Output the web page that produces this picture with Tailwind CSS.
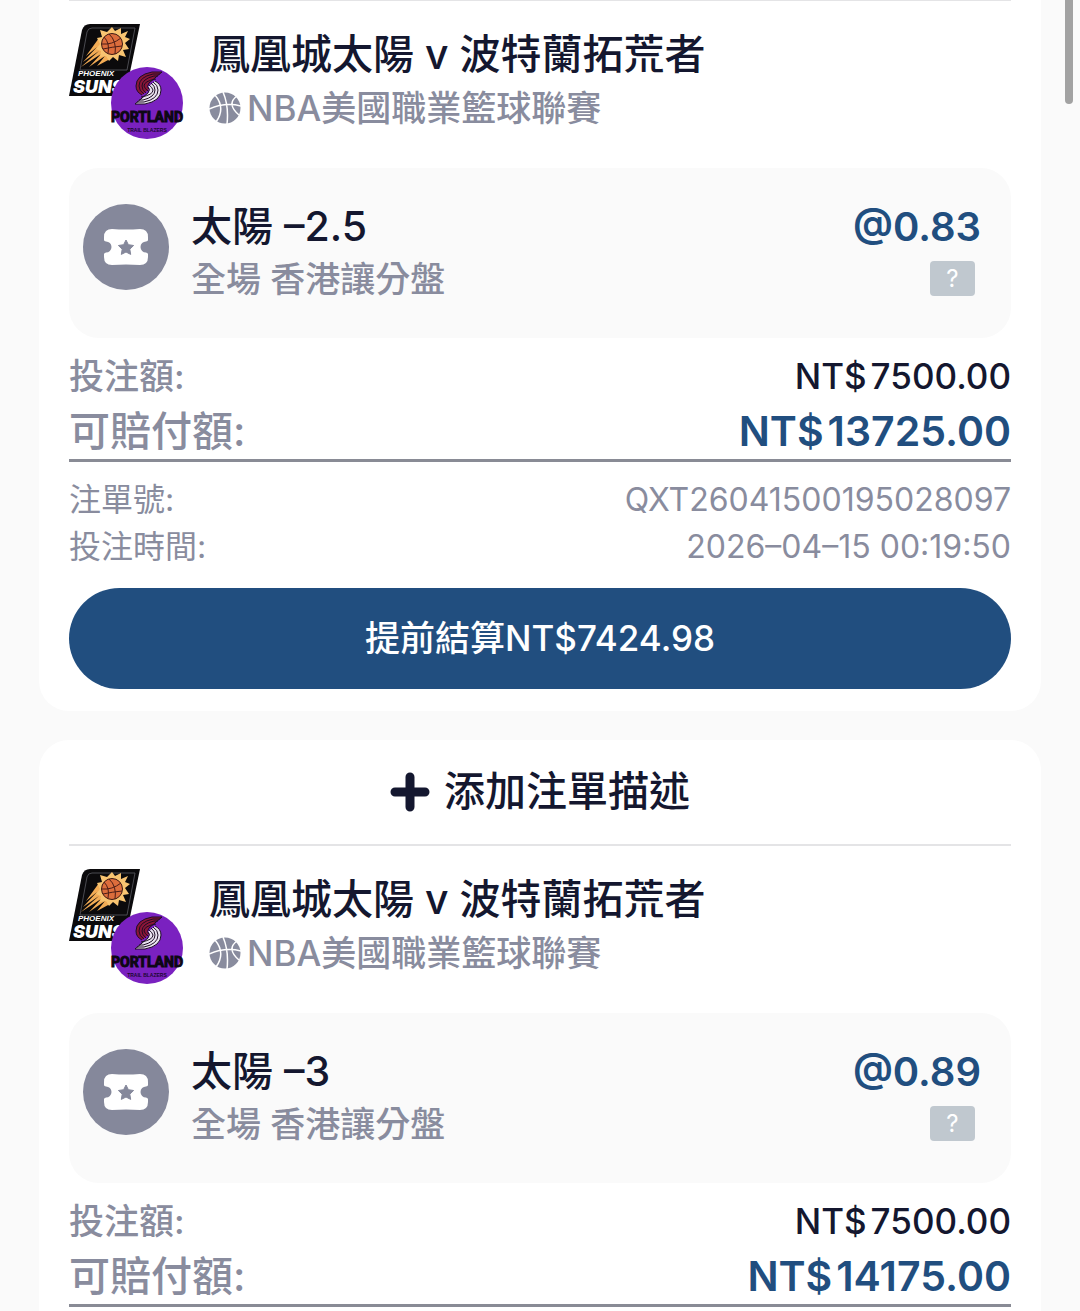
<!DOCTYPE html>
<html lang="zh-Hant">
<head>
  <meta charset="UTF-8" />
  <meta name="viewport" content="width=device-width, initial-scale=1.0" />
  <title>注單</title>
  <script src="https://cdn.jsdelivr.net/npm/@tailwindcss/browser@4"></script>
  <style>
    body { font-family: 'Inter', 'Noto Sans CJK TC', sans-serif; }
  </style>
</head>
<body class="bg-[#fafafa] text-[#14172f] min-h-screen">
  <!-- Shared icons -->
  <svg class="absolute w-0 h-0" aria-hidden="true">
    <symbol id="team-logos" viewBox="0 0 116 116">
      <!-- Suns -->
      <path d="M0 73 13 7Q15 1 21 1H71L56 73Z" fill="#0b0a0c" />
      <path d="M11 47 18 9Q19 5 23 5H66L58 47Z" fill="none" stroke="#4a4a50" stroke-width="1" />
      <path d="M30 15 17 33 28 24 14 39 30 28 12 44 32 31 20 44 36 33 28 43 41 36Z" fill="#f3ac55" />
      <path d="M43 4 46 8 52 5 52 11 59 8 56 14 61 16 56 20 60 26 54 27 57 34 50 32 49 38 44 34 40 38 37 33 31 34 32 28 27 26 31 21 28 15 33 14 31 7 38 9Z" fill="#f8c471" />
      <circle cx="43" cy="21" r="10.500" fill="#dc6d3c" stroke="#3c1712" stroke-width="1" />
      <path d="M33 21Q43 22 52 15M40 11Q48 18 46 31M34 26Q43 24 53 23M35 14Q41 20 39 30" fill="none" stroke="#4b1d16" stroke-width="1" />
      <text x="9" y="53" fill="#ffffff" class="text-[8px] font-bold italic font-['Liberation_Sans']">PHOENIX</text>
      <text x="4" y="70" fill="#ffffff" class="text-[18px] font-black italic font-['Inter']">SUNS</text>
      <!-- Trail Blazers -->
      <circle cx="78" cy="80" r="36" fill="#7a21c0" />
      <path d="M93 49H83Q67 52 67 63 67 69 73 72L80 66Q77 64 80 60Z" fill="#8c1538" />
      <g fill="none" stroke="#1d0d24" stroke-width="1">
        <path d="M93 49H83Q67 52 67 63 67 69 73 72" />
        <path d="M91 51H84Q70 54 70 63 70 68 75 71" />
        <path d="M89 53H85Q73 56 73 63 73 67 77 70" />
        <path d="M87 56Q75 58 75 63 76 66 79 68" />
        <path d="M93 49 80 60Q77 64 80 66" />
      </g>
      <g transform="rotate(180 79.500 65)">
        <path d="M93 49H83Q67 52 67 63 67 69 73 72L80 66Q77 64 80 60Z" fill="#e9e2f0" />
        <g fill="none" stroke="#1d0d24" stroke-width="1">
          <path d="M93 49H83Q67 52 67 63 67 69 73 72" />
          <path d="M91 51H84Q70 54 70 63 70 68 75 71" />
          <path d="M89 53H85Q73 56 73 63 73 67 77 70" />
          <path d="M87 56Q75 58 75 63 76 66 79 68" />
          <path d="M93 49 80 60Q77 64 80 66" />
        </g>
      </g>
      <text x="78" y="99" text-anchor="middle" fill="#0d0714" stroke="#0d0714" stroke-width="1" class="text-[14px] font-bold font-['Roboto']">PORTLAND</text>
      <text x="78" y="109" text-anchor="middle" fill="#1c0730" class="text-[5px] font-bold font-['Liberation_Sans']">TRAIL BLAZERS</text>
    </symbol>
    <symbol id="basketball" viewBox="0 0 32 32">
      <circle cx="16" cy="16" r="15.500" fill="#898c9e" />
      <g fill="none" stroke="#ffffff" stroke-width="1.500">
        <path d="M14 0Q20 14 18 32M0 17Q16 10 32 14M6 3Q17 16 7 30M28 4Q17 12 30 23" />
      </g>
    </symbol>
    <symbol id="ticket" viewBox="0 0 44 36">
      <path d="M8 0Q22 1 36 0Q44 0 44 8V11Q44 12 42 12.500A5.500 5.500 0 0 0 42 23.500Q44 24 44 25V28Q44 36 36 36Q22 35 8 36Q0 36 0 28V25Q0 24 2 23.500A5.500 5.500 0 0 0 2 12.500Q0 12 0 11V8Q0 0 8 0Z" fill="#ffffff" />
      <path d="M22 11 24.400 15.700 29.600 16.500 25.800 20.200 26.700 25.400 22 23 17.300 25.400 18.200 20.200 14.400 16.500 19.600 15.700Z" fill="#85889b" stroke="#85889b" stroke-width="1" stroke-linejoin="round" />
    </symbol>
  </svg>

  <!-- Scroll indicator -->
  <div class="fixed top-0 right-[7px] w-2 h-[104px] rounded-b-full bg-[#a2a2a2]"></div>

  <main class="flex flex-col gap-[29px] px-[39px]">
    <!-- Bet 1 -->
    <article class="bg-white rounded-b-[30px] px-[30px] pb-[22px]">
      <hr class="border-t border-[#e4e4e6]" />
      <header class="flex items-center gap-6 pt-[22px]">
        <svg class="w-[116px] h-[116px] shrink-0"><use href="#team-logos" /></svg>
        <div>
          <h2 class="text-[41px] leading-[54px] font-medium">鳳凰城太陽 v 波特蘭拓荒者</h2>
          <p class="flex items-center gap-[6px] text-[35px] leading-[54px] font-medium text-[#898c9e]">
            <svg class="w-8 h-8 shrink-0"><use href="#basketball" /></svg>NBA美國職業籃球聯賽
          </p>
        </div>
      </header>

      <section class="flex items-start mt-[29px] py-8 pl-[14px] pr-[30px] rounded-[30px] bg-[#fafafa]">
        <div class="flex items-center justify-center w-[86px] h-[86px] mt-1 rounded-full bg-[#85889b] shrink-0">
          <svg class="w-11 h-9"><use href="#ticket" /></svg>
        </div>
        <div class="ml-[22px] grow">
          <h3 class="text-[41px] leading-[53px] font-medium">太陽 –2.5</h3>
          <p class="text-[35px] leading-[53px] font-medium text-[#898c9e]">全場 香港讓分盤</p>
        </div>
        <div class="flex flex-col items-end">
          <span class="text-[40px] leading-[53px] font-semibold text-[#214e7f]">@0.83</span>
          <button aria-label="說明" class="w-[45px] h-[35px] mt-2 mr-[6px] rounded-[4px] bg-[#c0c8cf] text-white text-[24px] leading-[35px]">?</button>
        </div>
      </section>

      <dl class="mt-[11px] border-b-3 border-[#898b95] leading-[55px]">
        <div class="flex justify-between text-[35px] font-medium">
          <dt class="text-[#898c9e]">投注額:</dt>
          <dd class="flex gap-1"><span>NT$</span><span>7500.00</span></dd>
        </div>
        <div class="flex justify-between text-[41px] font-medium">
          <dt class="text-[#898c9e]">可賠付額:</dt>
          <dd class="flex gap-1 font-semibold text-[#214e7f]"><span>NT$</span><span>13725.00</span></dd>
        </div>
      </dl>
      <dl class="pt-[14px] text-[32px] leading-[47px] text-[#898c9e]">
        <div class="flex justify-between">
          <dt>注單號:</dt>
          <dd>QXT26041500195028097</dd>
        </div>
        <div class="flex justify-between">
          <dt>投注時間:</dt>
          <dd>2026–04–15 00:19:50</dd>
        </div>
      </dl>

      <button class="w-full h-[101px] mt-[18px] rounded-full bg-[#214e7f] text-white text-[35px] font-medium">提前結算NT$7424.98</button>
    </article>

    <!-- Bet 2 -->
    <article class="bg-white rounded-t-[30px] px-[30px] pb-1">
      <button class="flex items-center justify-center gap-[14px] w-full h-[104px] text-[41px] font-medium">
        <svg class="w-10 h-10" viewBox="0 0 40 40"><path d="M20 5V35M5 20H35" stroke="currentColor" stroke-width="9" stroke-linecap="round" /></svg>添加注單描述
      </button>
      <hr class="border-t-2 border-[#e4e4e6]" />
      <header class="flex items-center gap-6 pt-[22px]">
        <svg class="w-[116px] h-[116px] shrink-0"><use href="#team-logos" /></svg>
        <div>
          <h2 class="text-[41px] leading-[54px] font-medium">鳳凰城太陽 v 波特蘭拓荒者</h2>
          <p class="flex items-center gap-[6px] text-[35px] leading-[54px] font-medium text-[#898c9e]">
            <svg class="w-8 h-8 shrink-0"><use href="#basketball" /></svg>NBA美國職業籃球聯賽
          </p>
        </div>
      </header>

      <section class="flex items-start mt-[29px] py-8 pl-[14px] pr-[30px] rounded-[30px] bg-[#fafafa]">
        <div class="flex items-center justify-center w-[86px] h-[86px] mt-1 rounded-full bg-[#85889b] shrink-0">
          <svg class="w-11 h-9"><use href="#ticket" /></svg>
        </div>
        <div class="ml-[22px] grow">
          <h3 class="text-[41px] leading-[53px] font-medium">太陽 –3</h3>
          <p class="text-[35px] leading-[53px] font-medium text-[#898c9e]">全場 香港讓分盤</p>
        </div>
        <div class="flex flex-col items-end">
          <span class="text-[40px] leading-[53px] font-semibold text-[#214e7f]">@0.89</span>
          <button aria-label="說明" class="w-[45px] h-[35px] mt-2 mr-[6px] rounded-[4px] bg-[#c0c8cf] text-white text-[24px] leading-[35px]">?</button>
        </div>
      </section>

      <dl class="mt-[11px] border-b-3 border-[#898b95] leading-[55px]">
        <div class="flex justify-between text-[35px] font-medium">
          <dt class="text-[#898c9e]">投注額:</dt>
          <dd class="flex gap-1"><span>NT$</span><span>7500.00</span></dd>
        </div>
        <div class="flex justify-between text-[41px] font-medium">
          <dt class="text-[#898c9e]">可賠付額:</dt>
          <dd class="flex gap-1 font-semibold text-[#214e7f]"><span>NT$</span><span>14175.00</span></dd>
        </div>
      </dl>
    </article>
  </main>
</body>
</html>
